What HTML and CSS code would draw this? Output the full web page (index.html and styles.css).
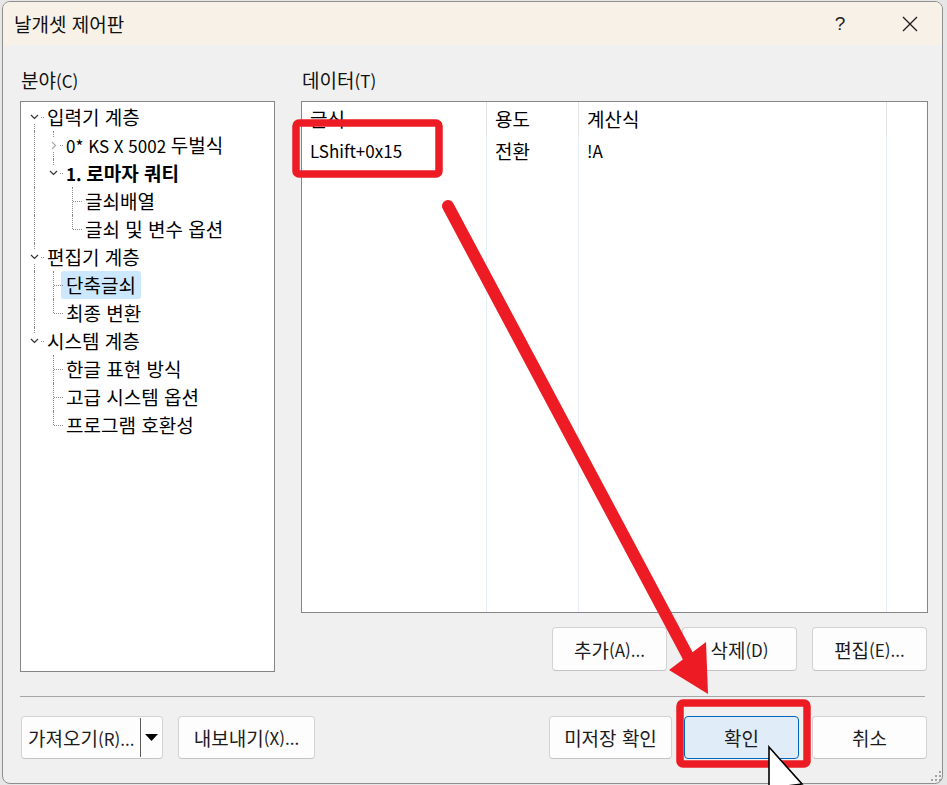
FILE: index.html
```html
<!DOCTYPE html>
<html lang="ko">
<head>
<meta charset="utf-8">
<title>날개셋 제어판</title>
<link rel="stylesheet" href="styles.css">
</head>
<body>
<div class="window">
  <div class="titlebar">
    <span class="title">날개셋 제어판</span>
    <span class="help">?</span>
    <span class="close"><svg width="16" height="16" viewBox="0 0 16 16"><path d="M1 1 L15 15 M15 1 L1 15" stroke="#1a1a1a" stroke-width="1.3" fill="none"/></svg></span>
  </div>
  <div class="content">
    <div class="panes">
      <div class="pane">
        <div class="label">분야<span class="e">(C)</span></div>
        <div class="tree">
          <div class="row"><span class="c f"><span class="exp"><svg width="9" height="6" viewBox="0 0 9 6"><path d="M1 1 L4.5 4.5 L8 1" stroke="#333" stroke-width="1.2" fill="none"/></svg></span></span><span class="txt">입력기 계층</span></div>
          <div class="row"><span class="c v"></span><span class="c t"><span class="exp"><svg width="6" height="9" viewBox="0 0 6 9"><path d="M1 1 L4.5 4.5 L1 8" stroke="#a8a8a8" stroke-width="1.2" fill="none"/></svg></span></span><span class="txt"><span class="e">0* KS X 5002 </span>두벌식</span></div>
          <div class="row"><span class="c v"></span><span class="c l"><span class="exp"><svg width="9" height="6" viewBox="0 0 9 6"><path d="M1 1 L4.5 4.5 L8 1" stroke="#333" stroke-width="1.2" fill="none"/></svg></span></span><span class="txt bold"><span class="e">1. </span>로마자 쿼티</span></div>
          <div class="row"><span class="c v"></span><span class="c"></span><span class="c t"></span><span class="txt">글쇠배열</span></div>
          <div class="row"><span class="c v"></span><span class="c"></span><span class="c l"></span><span class="txt">글쇠 및 변수 옵션</span></div>
          <div class="row"><span class="c t"><span class="exp"><svg width="9" height="6" viewBox="0 0 9 6"><path d="M1 1 L4.5 4.5 L8 1" stroke="#333" stroke-width="1.2" fill="none"/></svg></span></span><span class="txt">편집기 계층</span></div>
          <div class="row"><span class="c v"></span><span class="c t"></span><span class="txt sel">단축글쇠</span></div>
          <div class="row"><span class="c v"></span><span class="c l"></span><span class="txt">최종 변환</span></div>
          <div class="row"><span class="c l"><span class="exp"><svg width="9" height="6" viewBox="0 0 9 6"><path d="M1 1 L4.5 4.5 L8 1" stroke="#333" stroke-width="1.2" fill="none"/></svg></span></span><span class="txt">시스템 계층</span></div>
          <div class="row"><span class="c"></span><span class="c t"></span><span class="txt">한글 표현 방식</span></div>
          <div class="row"><span class="c"></span><span class="c t"></span><span class="txt">고급 시스템 옵션</span></div>
          <div class="row"><span class="c"></span><span class="c l"></span><span class="txt">프로그램 호환성</span></div>
        </div>
      </div>
      <div class="pane">
        <div class="label">데이터<span class="e">(T)</span></div>
        <div class="list">
          <div class="col col1"><div class="hd">글식</div><div class="cell e">LShift+0x15</div></div>
          <div class="col col2"><div class="hd">용도</div><div class="cell">전환</div></div>
          <div class="col col3"><div class="hd">계산식</div><div class="cell e">!A</div></div>
          <div class="col col4"><div class="hd hd-last"></div></div>
        </div>
        <div class="list-buttons">
          <div class="btn">추가<span class="e">(A)...</span></div>
          <div class="btn">삭제<span class="e">(D)</span></div>
          <div class="btn">편집<span class="e">(E)...</span></div>
        </div>
      </div>
    </div>
    <div class="sep"></div>
    <div class="bottom">
      <div class="group left-group">
        <div class="btn split"><span class="split-text">가져오기<span class="e">(R)...</span></span><span class="split-div"></span><span class="split-arrow"><svg width="13" height="7" viewBox="0 0 13 7"><path d="M0 0 L13 0 L6.5 7 Z" fill="#000"/></svg></span></div>
        <div class="btn export">내보내기<span class="e">(X)...</span></div>
      </div>
      <div class="group right-group">
        <div class="btn unsaved">미저장 확인</div>
        <div class="btn primary">확인</div>
        <div class="btn cancel">취소</div>
      </div>
    </div>
  </div>
  <svg class="grip" width="12" height="12" viewBox="0 0 12 12"><g fill="#a3a3a3"><rect x="9" y="1" width="2" height="2"/><rect x="5" y="5" width="2" height="2"/><rect x="9" y="5" width="2" height="2"/><rect x="1" y="9" width="2" height="2"/><rect x="5" y="9" width="2" height="2"/><rect x="9" y="9" width="2" height="2"/></g></svg>
</div>
<svg class="annot" width="947" height="785" viewBox="0 0 947 785">
  <rect x="296" y="123" width="143" height="51" rx="3" fill="none" stroke="#ed1c24" stroke-width="7.5"/>
  <rect x="680" y="703" width="127" height="61" rx="3" fill="none" stroke="#ed1c24" stroke-width="7.5"/>
  <line x1="448" y1="206" x2="690" y2="660" stroke="#ed1c24" stroke-width="12" stroke-linecap="round"/>
  <polygon points="669,670 708,694 706,642" fill="#ed1c24"/>
</svg>
<svg class="cursor" width="40" height="42" viewBox="0 0 40 42"><polygon points="2,2 2,55 13,44 21,63 28,60 20,41 35,39" fill="#fff" stroke="#000" stroke-width="1.6" stroke-linejoin="miter"/></svg>
</body>
</html>
```
FILE: styles.css
```css
html, body {
  margin: 0;
  padding: 0;
}
body {
  width: 947px;
  height: 785px;
  overflow: hidden;
  position: relative;
  background: #e6e6e6;
  font-family: "Noto Sans CJK KR", "Noto Sans", sans-serif;
  font-size: 19px;
  color: #000;
}
.e {
  font-size: 17px;
}
.window {
  box-sizing: border-box;
  position: relative;
  width: 941px;
  height: 783px;
  margin: 1px 0 0 2px;
  border: 1px solid #8f8f8f;
  border-radius: 8px;
  background: #f0f0f0;
}
.titlebar {
  height: 43px;
  background: #f7f1e8;
  border-radius: 7px 7px 0 0;
  display: flex;
  align-items: center;
}
.title {
  flex: 1;
  padding-left: 11px;
  line-height: 43px;
  color: #111;
}
.help {
  width: 46px;
  margin-right: 24px;
  text-align: center;
  font-family: "Liberation Sans", sans-serif;
  font-size: 19px;
  color: #222;
}
.close {
  width: 46px;
  margin-right: 9px;
  display: flex;
  justify-content: center;
}
.content {
  padding: 23px 0 0 17px;
}
.panes {
  display: grid;
  grid-template-columns: 255px 627px;
  column-gap: 26px;
  align-items: start;
}
.label {
  height: 24px;
  line-height: 24px;
  margin-bottom: 9px;
  padding-left: 1px;
  color: #111;
}
.tree {
  box-sizing: border-box;
  height: 571px;
  border: 1px solid #868686;
  background: #fff;
  padding: 1px 0 0 4px;
}
.row {
  display: flex;
  height: 28px;
  align-items: center;
  white-space: nowrap;
}
.c {
  flex: none;
  width: 19px;
  height: 28px;
  position: relative;
}
.c::before,
.c::after {
  position: absolute;
}
.v::before,
.t::before {
  content: "";
  left: 9px;
  top: 0;
  bottom: 0;
  border-left: 1px dotted #8a8a8a;
}
.l::before {
  content: "";
  left: 9px;
  top: 0;
  height: 14px;
  border-left: 1px dotted #8a8a8a;
}
.f::before {
  content: "";
  left: 9px;
  top: 14px;
  bottom: 0;
  border-left: 1px dotted #8a8a8a;
}
.t::after,
.l::after,
.f::after {
  content: "";
  left: 10px;
  right: 0;
  top: 14px;
  border-top: 1px dotted #8a8a8a;
}
.exp {
  position: absolute;
  left: 4px;
  top: 7px;
  width: 11px;
  height: 14px;
  background: #fff;
  display: flex;
  align-items: center;
  justify-content: center;
  z-index: 1;
}
.txt {
  margin-left: 3px;
  line-height: 28px;
}
.bold {
  font-weight: 700;
}
.sel {
  background: #cce8ff;
  border-radius: 3px;
  margin-left: -2px;
  padding: 0 5px;
}
.list {
  box-sizing: border-box;
  height: 512px;
  border: 1px solid #868686;
  background: #fff;
  display: flex;
}
.col {
  border-right: 1px solid #e6eefa;
}
.col1 { width: 184px; }
.col2 { width: 91px; }
.col3 { width: 307px; }
.col4 { flex: 1; border-right: 0; }
.hd {
  height: 34px;
  line-height: 34px;
  padding-left: 8px;
  margin-right: -1px;
  border-right: 1px solid #e3e3e3;
  position: relative;
}
.hd-last {
  border-right: 0;
}
.cell {
  height: 30px;
  line-height: 30px;
  padding-left: 8px;
  white-space: nowrap;
}
.list-buttons {
  display: flex;
  justify-content: flex-end;
  gap: 15px;
  margin-top: 14px;
  padding-right: 1px;
}
.btn {
  box-sizing: border-box;
  height: 44px;
  width: 115px;
  border: 1px solid #d3d3d3;
  border-bottom-color: #c4c4c4;
  border-radius: 4px;
  background: #fdfdfd;
  display: flex;
  align-items: center;
  justify-content: center;
  color: #1b1b1b;
  white-space: nowrap;
}
.sep {
  width: 905px;
  height: 1px;
  background: #a6a6a6;
  margin-top: 24px;
}
.bottom {
  display: flex;
  justify-content: space-between;
  width: 906px;
  margin: 19px 0 0 1px;
}
.group {
  display: flex;
}
.bottom .btn {
  height: 43px;
}
.left-group {
  gap: 15px;
}
.split {
  width: 142px;
  justify-content: flex-start;
}
.split-text {
  flex: 1;
  padding-left: 6px;
}
.split-div {
  width: 1px;
  height: 39px;
  background: #5a5a5a;
}
.split-arrow {
  width: 21px;
  display: flex;
  justify-content: center;
  align-items: center;
}
.export {
  width: 137px;
}
.unsaved {
  width: 123px;
  margin-right: 12px;
}
.primary {
  background: #e0ecf8;
  border-color: #0067c0;
  margin-right: 13px;
}
.grip {
  position: absolute;
  right: 0;
  bottom: 1px;
}
.annot {
  position: absolute;
  left: 0;
  top: 0;
  z-index: 5;
  pointer-events: none;
}
.cursor {
  position: absolute;
  left: 767px;
  top: 745px;
  z-index: 6;
}
```
